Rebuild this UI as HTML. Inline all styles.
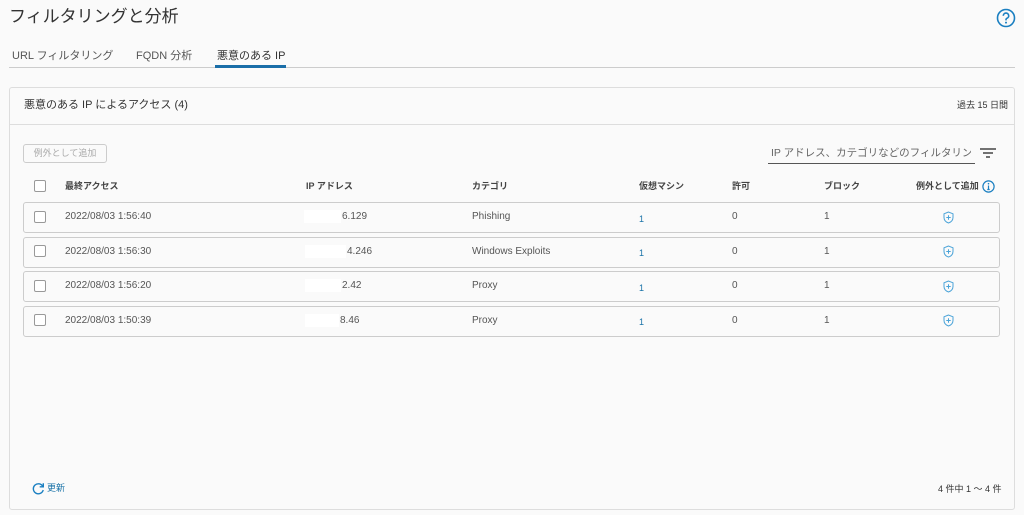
<!DOCTYPE html>
<html><head><meta charset="utf-8"><style>
*{box-sizing:border-box;margin:0;padding:0}
body{width:1024px;height:515px;background:#fafafa;font-family:"Liberation Sans","Noto Sans CJK JP",sans-serif;color:#555;position:relative;overflow:hidden;font-size:10px;line-height:13px}
.a{position:absolute;white-space:nowrap}
.card{position:absolute;left:9px;top:87px;width:1006px;height:423px;border:1px solid #ddd;border-radius:3px;background:#fafafa}
.row{position:absolute;left:23px;width:977px;height:31px;border:1px solid #ccc;border-radius:3px;background:#fafafa}
.cb{position:absolute;width:12px;height:12px;border:1px solid #999;border-radius:2px;background:#fff}
.hd{font-size:9px;font-weight:bold;color:#444}
.ip{position:absolute;height:13px;background:#fff}
.blue{color:#1a73a8}
</style></head><body>
<div class="a" style="left:9px;top:5px;font-size:17px;line-height:24px;color:#333">フィルタリングと分析</div>
<svg class="a" style="left:996px;top:8px" width="20" height="20" viewBox="0 0 20 20"><circle cx="10" cy="10" r="8.5" fill="none" stroke="#1a7fc1" stroke-width="1.6"/><path d="M7.3 7.8a2.7 2.7 0 1 1 3.6 2.5c-.7.3-.9.7-.9 1.5v.6" fill="none" stroke="#1a7fc1" stroke-width="1.6"/><circle cx="10" cy="14.6" r="1" fill="#1a7fc1"/></svg>
<div class="a" style="left:12px;top:48px;font-size:11px;line-height:16px;color:#555">URL フィルタリング</div>
<div class="a" style="left:136px;top:48px;font-size:11px;line-height:16px;color:#555">FQDN 分析</div>
<div class="a" style="left:217px;top:48px;font-size:11px;line-height:16px;color:#333">悪意のある IP</div>
<div class="a" style="left:9px;top:67px;width:1006px;height:1px;background:#ccc"></div>
<div class="a" style="left:215px;top:65px;width:71px;height:3px;background:#1a6ea8"></div>
<div class="card"></div>
<div class="a" style="left:24px;top:98px;font-size:11px;line-height:14px;color:#333">悪意のある IP によるアクセス (4)</div>
<div class="a" style="left:957px;top:99px;font-size:9px;line-height:12px;color:#333">過去 15 日間</div>
<div class="a" style="left:10px;top:124px;width:1004px;height:1px;background:#ddd"></div>
<div class="a" style="left:23px;top:144px;width:84px;height:19px;border:1px solid #ccc;border-radius:3px;font-size:9px;line-height:17px;color:#aaa;text-align:center">例外として追加</div>
<div class="a" style="left:771px;top:146px;width:200px;overflow:hidden;font-size:10.5px;line-height:14px;color:#666">IP アドレス、カテゴリなどのフィルタリング</div>
<div class="a" style="left:768px;top:163px;width:207px;height:1px;background:#555"></div>
<svg class="a" style="left:979px;top:147px" width="18" height="12"><path d="M1 2h16M4 6h10M7 10h4" stroke="#444" stroke-width="1.6"/></svg>
<div class="cb" style="left:34px;top:180px"></div>
<div class="a hd" style="left:65px;top:180px">最終アクセス</div>
<div class="a hd" style="left:306px;top:180px">IP アドレス</div>
<div class="a hd" style="left:472px;top:180px">カテゴリ</div>
<div class="a hd" style="left:639px;top:180px">仮想マシン</div>
<div class="a hd" style="left:732px;top:180px">許可</div>
<div class="a hd" style="left:824px;top:180px">ブロック</div>
<div class="a hd" style="left:916px;top:180px">例外として追加</div>
<svg class="a" style="left:982px;top:180px" width="13" height="13"><circle cx="6.5" cy="6.5" r="5.6" fill="none" stroke="#1a7fc1" stroke-width="1.2"/><path d="M6.5 5.5v4M5.3 9.5h2.4" stroke="#1a7fc1" stroke-width="1.2"/><circle cx="6.5" cy="3.7" r=".8" fill="#1a7fc1"/></svg>

<div class="row" style="top:202px"></div>
<div class="row" style="top:237px"></div>
<div class="row" style="top:271px"></div>
<div class="row" style="top:306px"></div>

<div class="cb" style="left:34px;top:211px"></div>
<div class="cb" style="left:34px;top:245px"></div>
<div class="cb" style="left:34px;top:280px"></div>
<div class="cb" style="left:34px;top:314px"></div>

<div class="a" style="left:65px;top:210px">2022/08/03 1:56:40</div>
<div class="a" style="left:65px;top:245px">2022/08/03 1:56:30</div>
<div class="a" style="left:65px;top:279px">2022/08/03 1:56:20</div>
<div class="a" style="left:65px;top:314px">2022/08/03 1:50:39</div>

<div class="ip" style="left:304px;top:210px;width:37px"></div><div class="a" style="left:342px;top:210px">6.129</div>
<div class="ip" style="left:305px;top:245px;width:41px"></div><div class="a" style="left:347px;top:245px">4.246</div>
<div class="ip" style="left:305px;top:279px;width:36px"></div><div class="a" style="left:342px;top:279px">2.42</div>
<div class="ip" style="left:305px;top:314px;width:34px"></div><div class="a" style="left:340px;top:314px">8.46</div>

<div class="a" style="left:472px;top:210px">Phishing</div>
<div class="a" style="left:472px;top:245px">Windows Exploits</div>
<div class="a" style="left:472px;top:279px">Proxy</div>
<div class="a" style="left:472px;top:314px">Proxy</div>

<div class="a blue" style="left:639px;top:213px;font-size:9px">1</div>
<div class="a blue" style="left:639px;top:247px;font-size:9px">1</div>
<div class="a blue" style="left:639px;top:282px;font-size:9px">1</div>
<div class="a blue" style="left:639px;top:316px;font-size:9px">1</div>

<div class="a" style="left:732px;top:210px">0</div><div class="a" style="left:824px;top:210px">1</div>
<div class="a" style="left:732px;top:245px">0</div><div class="a" style="left:824px;top:245px">1</div>
<div class="a" style="left:732px;top:279px">0</div><div class="a" style="left:824px;top:279px">1</div>
<div class="a" style="left:732px;top:314px">0</div><div class="a" style="left:824px;top:314px">1</div>

<svg class="a" style="left:943px;top:211px" width="11" height="13" viewBox="0 0 11 13"><path d="M5.5 1L1 2.8v3.6c0 2.8 2 4.8 4.5 5.6 2.5-.8 4.5-2.8 4.5-5.6V2.8z" fill="none" stroke="#4aa3d8" stroke-width="1"/><path d="M5.5 4.3v4.4M3.3 6.5h4.4" stroke="#4aa3d8" stroke-width="1"/></svg>
<svg class="a" style="left:943px;top:245px" width="11" height="13" viewBox="0 0 11 13"><path d="M5.5 1L1 2.8v3.6c0 2.8 2 4.8 4.5 5.6 2.5-.8 4.5-2.8 4.5-5.6V2.8z" fill="none" stroke="#4aa3d8" stroke-width="1"/><path d="M5.5 4.3v4.4M3.3 6.5h4.4" stroke="#4aa3d8" stroke-width="1"/></svg>
<svg class="a" style="left:943px;top:280px" width="11" height="13" viewBox="0 0 11 13"><path d="M5.5 1L1 2.8v3.6c0 2.8 2 4.8 4.5 5.6 2.5-.8 4.5-2.8 4.5-5.6V2.8z" fill="none" stroke="#4aa3d8" stroke-width="1"/><path d="M5.5 4.3v4.4M3.3 6.5h4.4" stroke="#4aa3d8" stroke-width="1"/></svg>
<svg class="a" style="left:943px;top:314px" width="11" height="13" viewBox="0 0 11 13"><path d="M5.5 1L1 2.8v3.6c0 2.8 2 4.8 4.5 5.6 2.5-.8 4.5-2.8 4.5-5.6V2.8z" fill="none" stroke="#4aa3d8" stroke-width="1"/><path d="M5.5 4.3v4.4M3.3 6.5h4.4" stroke="#4aa3d8" stroke-width="1"/></svg>

<svg class="a" style="left:32px;top:482px" width="13" height="13" viewBox="0 0 13 13"><path d="M10.8 4.5A5 5 0 1 0 11.2 8" fill="none" stroke="#1a7fc1" stroke-width="1.4"/><path d="M11.3 1.2v3.6H7.7" fill="none" stroke="#1a7fc1" stroke-width="1.4"/></svg>
<div class="a blue" style="left:47px;top:482px;font-size:9px">更新</div>
<div class="a" style="left:938px;top:483px;font-size:9px;color:#333">4 件中 1 ～ 4 件</div>
</body></html>
